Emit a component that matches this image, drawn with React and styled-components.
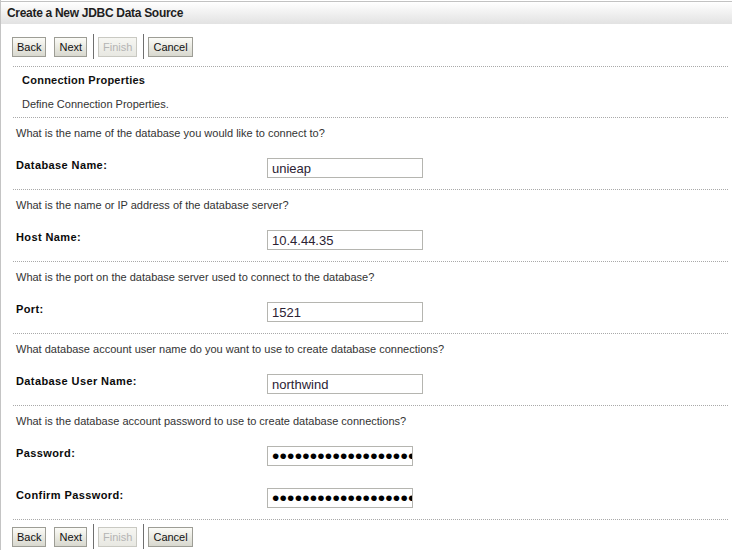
import React from "react";
import styled, { createGlobalStyle } from "styled-components";

const GlobalStyle = createGlobalStyle`
  body {
    margin: 0;
    background: #ffffff;
    font-family: "Liberation Sans", Arial, sans-serif;
  }
`;

const Panel = styled.div`
  padding-top: 1px;
  min-height: 549px;
  border-left: 1px solid #c4c4c4;
`;

const Header = styled.div`
  height: 22px;
  line-height: 22px;
  padding-left: 6px;
  border-top: 1px solid #c2c2c2;
  background: linear-gradient(#ffffff, #f2f2f2 45%, #e2e2e2);
  font-size: 12px;
  font-weight: bold;
  letter-spacing: -0.3px;
  color: #1e1e1e;
`;

const Content = styled.div`
  padding: 0 4px 0 11px;
`;

const Toolbar = styled.div`
  display: flex;
  align-items: center;
  height: 25px;
  margin-top: ${(p) => (p.$bottom ? "4px" : "10px")};
`;

const Button = styled.button`
  height: 20px;
  padding: 0 4px;
  margin-right: ${(p) => p.$gap || 0}px;
  border: 1px solid ${(p) => (p.disabled ? "#c9c9c2" : "#9d9d95")};
  background: ${(p) =>
    p.disabled
      ? "linear-gradient(#f6f6f2, #e8e8e2)"
      : "linear-gradient(#fbfbf7, #e6e6de 60%, #d8d8cf)"};
  font-family: "Liberation Sans", Arial, sans-serif;
  font-size: 11px;
  color: ${(p) => (p.disabled ? "#b4b4b4" : "#111111")};
  cursor: pointer;
`;

const Separator = styled.span`
  width: 1px;
  height: 25px;
  margin: 0 4px 0 0;
  background: #6f6f6f;
`;

const Divider = styled.div`
  margin-left: 1px;
  border-top: 1px dotted #a9a9a9;
  margin-top: ${(p) => p.$top || 0}px;
`;

const Heading = styled.div`
  padding-left: 10px;
  margin-top: 6px;
  line-height: 14px;
  font-size: 11px;
  font-weight: bold;
  letter-spacing: 0.25px;
  color: #111111;
`;

const Intro = styled.div`
  padding-left: 10px;
  margin: 10px 0 6px;
  line-height: 14px;
  font-size: 11px;
  color: #333333;
`;

const Section = styled.div`
  padding: 8px 0 11px 4px;
`;

const Question = styled.div`
  line-height: 14px;
  font-size: 11px;
  color: #333333;
  margin-bottom: 18px;
`;

const Field = styled.label`
  display: grid;
  grid-template-columns: 251px auto;
  align-items: start;
  & + & {
    margin-top: 22px;
  }
`;

const Label = styled.span`
  line-height: 14px;
  font-size: 11px;
  font-weight: bold;
  letter-spacing: 0.4px;
  color: #0a0a0a;
`;

const Input = styled.input`
  box-sizing: border-box;
  width: ${(p) => (p.type === "password" ? 146 : 156)}px;
  height: 20px;
  margin: 0;
  padding: ${(p) => (p.type === "password" ? "0 0 0 4px" : "0 4px")};
  border: 1px solid #b5b5b0;
  outline: none;
  font-family: "Liberation Sans", Arial, sans-serif;
  font-size: ${(p) => (p.type === "password" ? "21px" : "13px")};
  letter-spacing: ${(p) => (p.type === "password" ? "0.2px" : "0")};
  color: ${(p) => (p.type === "password" ? "#000000" : "#2b2233")};
  background: #ffffff;
`;

const fields = [
  {
    question: "What is the name of the database you would like to connect to?",
    rows: [{ label: "Database Name:", value: "unieap" }],
  },
  {
    question: "What is the name or IP address of the database server?",
    rows: [{ label: "Host Name:", value: "10.4.44.35" }],
  },
  {
    question: "What is the port on the database server used to connect to the database?",
    rows: [{ label: "Port:", value: "1521" }],
  },
  {
    question: "What database account user name do you want to use to create database connections?",
    rows: [{ label: "Database User Name:", value: "northwind" }],
  },
  {
    question: "What is the database account password to use to create database connections?",
    rows: [
      { label: "Password:", value: "northwind1234567890", type: "password" },
      { label: "Confirm Password:", value: "northwind1234567890", type: "password" },
    ],
  },
];

const Buttons = ({ bottom }) => (
  <Toolbar $bottom={bottom}>
    <Button $gap={8}>Back</Button>
    <Button $gap={6}>Next</Button>
    <Separator />
    <Button disabled $gap={6}>
      Finish
    </Button>
    <Separator />
    <Button>Cancel</Button>
  </Toolbar>
);

const App = () => {
  return (
    <>
      <GlobalStyle />
      <Panel>
        <Header>Create a New JDBC Data Source</Header>
        <Content>
          <Buttons />
          <Divider $top={7} />
          <Heading>Connection Properties</Heading>
          <Intro>Define Connection Properties.</Intro>
          {fields.map((f) => (
            <React.Fragment key={f.question}>
              <Divider />
              <Section>
                <Question>{f.question}</Question>
                {f.rows.map((r) => (
                  <Field key={r.label}>
                    <Label>{r.label}</Label>
                    <Input type={r.type || "text"} defaultValue={r.value} readOnly />
                  </Field>
                ))}
              </Section>
            </React.Fragment>
          ))}
          <Divider />
          <Buttons bottom />
        </Content>
      </Panel>
    </>
  );
};

export default App;
